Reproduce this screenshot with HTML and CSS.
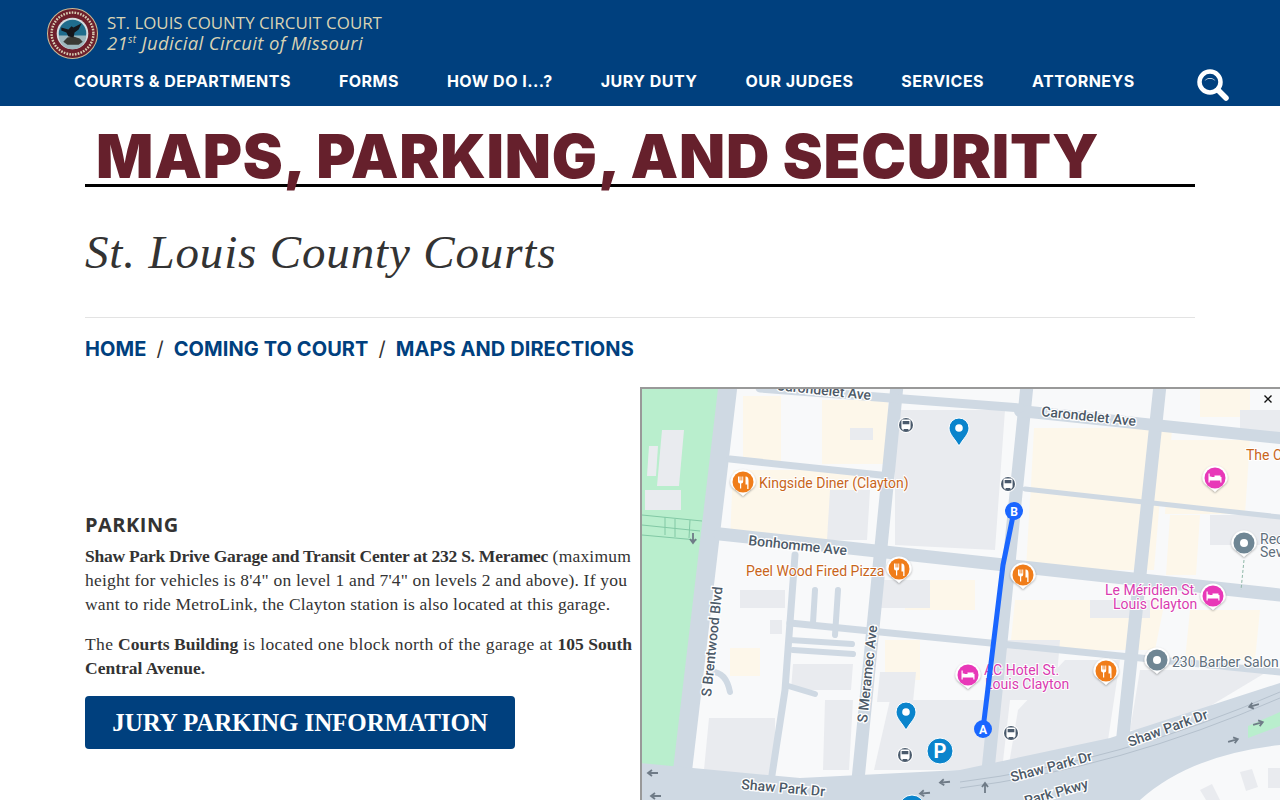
FILE: index.html
```html
<!DOCTYPE html>
<html lang="en">
    <head>
        <meta charset="UTF-8" />
        <title>Maps, Parking, and Security</title>
        <link rel="stylesheet" href="styles.css">
    </head>
    <body>
        <header class="site-header">
            <div class="brand">
                <svg class="seal" viewBox="0 0 50 50" aria-hidden="true">
                    <circle cx="25" cy="25" r="24.5" fill="#6d1f2b" stroke="#c9bb96" stroke-width="1"/>
                    <circle cx="25" cy="25" r="20.5" fill="none" stroke="#d8cfb4" stroke-width="2.4" stroke-dasharray="1.6 1.2"/>
                    <circle cx="25" cy="25" r="15.5" fill="#d5dde0"/>
                    <circle cx="25" cy="25" r="13.5" fill="#1f6c8c"/>
                    <path d="M11.5 27h27a13.5 13.5 0 0 1-27 0z" fill="#9fb7bd"/>
                    <path d="M16 33l4-4 6-1 6 2 3 3-4 3h-11z" fill="#3a3a34"/>
                    <path d="M14 19l7 2 3-3 2 1 8-4-3 6-4 3-1 5-5-1-2-4-5-2z" fill="#15161a"/>
                </svg>
                <div class="brand-text">
                    <div class="brand-name">ST. LOUIS COUNTY CIRCUIT COURT</div>
                    <div class="brand-sub">21<sup>st</sup> Judicial Circuit of Missouri</div>
                </div>
            </div>
            <nav class="main-nav">
                <a href="#">COURTS &amp; DEPARTMENTS</a>
                <a href="#">FORMS</a>
                <a href="#">HOW DO I...?</a>
                <a href="#">JURY DUTY</a>
                <a href="#">OUR JUDGES</a>
                <a href="#">SERVICES</a>
                <a href="#">ATTORNEYS</a>
                <svg class="search-icon" viewBox="0 0 32 32" aria-hidden="true">
                    <circle cx="13" cy="13" r="10.5" fill="none" stroke="#fff" stroke-width="4.5"/>
                    <path d="M7.5 12a6.5 6.5 0 0 1 11 0a8 8 0 0 0-11 0z" fill="#fff"/>
                    <path d="M21 21l8 8" stroke="#fff" stroke-width="5.5" stroke-linecap="round"/>
                </svg>
            </nav>
        </header>

        <main class="page">
            <h1 class="page-title">MAPS, PARKING, AND SECURITY</h1>
            <h2 class="subtitle">St. Louis County Courts</h2>
            <div class="breadcrumb">
                <a href="#">HOME</a><span>/</span><a href="#">COMING TO COURT</a><span>/</span><a href="#">MAPS AND DIRECTIONS</a>
            </div>

            <div class="content">
                <section class="info">
                    <h3>PARKING</h3>
                    <p><strong>Shaw Park Drive Garage and Transit Center at 232 S. Meramec</strong> (maximum height for vehicles is 8'4" on level 1 and 7'4" on levels 2 and above). If you want to ride MetroLink, the Clayton station is also located at this garage.</p>
                    <p>The <strong>Courts Building</strong> is located one block north of the garage at <strong>105 South Central Avenue.</strong></p>
                    <a class="btn" href="#">JURY PARKING INFORMATION</a>
                </section>

                <div class="map">
                    <svg class="map-svg" viewBox="640 387 640 413">
                        <defs>
                            <filter id="pin-shadow" x="-30%" y="-30%" width="160%" height="160%">
                                <feDropShadow dx="0" dy="1" stdDeviation="0.8" flood-color="#000" flood-opacity="0.35"/>
                            </filter>
                            <g id="tail">
                                <path d="M-12.5 0a12.5 12.5 0 1 1 25 0c0 6-7 8-12.5 14c-5.500-6-12.500-8-12.500-14z" fill="#fff" filter="url(#pin-shadow)"/>
                            </g>
                            <g id="food">
                                <use href="#tail"/>
                                <circle r="10.500" fill="#f07d1a"/>
                                <path d="M-5-5.500v5q0 2 2 2v5h1.200v-5q2 0 2-2v-5h-.9v4h-.9v-4h-.9v4h-.9v-4zM2.500-5.500q3-.2 3 4v8.500h-1.300v-4.500h-1.700z" fill="#fff"/>
                            </g>
                            <g id="hotel">
                                <use href="#tail"/>
                                <circle r="10.500" fill="#e838b8"/>
                                <path d="M-6.500-4.500v9h1.200v-2h10.600v2h1.200v-5.500h-10v-.5h-1.800v-3zM-.5-2.500h6v1.500h-6z" fill="#fff"/>
                            </g>
                            <g id="place">
                                <use href="#tail"/>
                                <circle r="10.500" fill="#6f8694"/>
                                <circle r="4" fill="#fff"/>
                            </g>
                            <g id="blue-pin">
                                <path d="M0-14a10 10 0 0 1 10 10c0 6-6 11-10 18c-4-7-10-12-10-18a10 10 0 0 1 10-10z" fill="#0a84cc" stroke="#fff" stroke-width="1"/>
                                <circle cy="-4" r="3.800" fill="#fff"/>
                            </g>
                            <g id="bus">
                                <circle r="8" fill="#fff"/>
                                <circle r="7" fill="#4a5a6c"/>
                                <path transform="scale(1.200)" d="M-3.800-3.500q0-1 1-1h5.600q1 0 1 1v6q0 .8-.8 .8v1h-1v-1h-4v1h-1v-1q-.8 0-.8-.8zM-2.800-3.300v2.600h5.600v-2.600z" fill="#fff"/>
                            </g>
                            <path id="arrow" d="M-7 0h10M-3-3l-4 3 4 3" fill="none" stroke="#6f7b87" stroke-width="1.800"/>
                        </defs>

                        <rect x="640" y="387" width="640" height="413" fill="#f8f9fa"/>
                        <path class="park" d="M640 387h79l-35 384h-44z"/>
                        <path class="park-path" d="M642 515l60 6M642 525l58 6M642 535l55 5M665 517v18M675 519v18M690 520l-1 18"/>

                        <!-- beige blocks and grey buildings -->
                        <g class="beige">
                            <path d="M743 396h38v66h-38z"/>
                            <path d="M822 400h66v64h-66z"/>
                            <path d="M733 470h130l-3 70h-130z"/>
                            <path d="M1034 428h138l-5 76h-137z"/>
                            <path d="M1170 440h80l-5 74h-80z"/>
                            <path d="M1030 498h130l-6 72h-128z"/>
                            <path d="M1170 515h30l-4 60h-30z"/>
                            <path d="M1200 387h50v30h-50z"/>
                            <path d="M1015 600h150l-10 50h-145z"/>
                            <path d="M885 640h35v40h-35z"/>
                            <path d="M730 648h30v28h-30z"/>
                            <path d="M1190 610h70l-5 50h-70z"/>
                            <path d="M905 580h70v30h-70z"/>
                        </g>
                        <g class="bldg">
                            <path d="M662 430h22l-5 56h-22z"/>
                            <path d="M649 446h9l-2 30h-9z"/>
                            <path d="M645 490h36v20h-36z"/>
                            <path d="M895 410h110l-10 140l-100-5z"/>
                            <path d="M850 428h23v12h-23z"/>
                            <path d="M830 490h40l-3 50h-40z"/>
                            <path d="M740 590h45v18h-45z"/>
                            <path d="M793 664h60l-2 26h-60z"/>
                            <path d="M770 620h12v14h-12z"/>
                            <path d="M709 718h66v62h-72z"/>
                            <path d="M825 700h28l-4 70h-26z"/>
                            <path d="M880 672h36l-3 30h-36z"/>
                            <path d="M890 700h120l-8 70h-128z"/>
                            <path d="M1000 640h60l-5 60h-60z"/>
                            <path d="M1065 660h55l-12 80l-100 30l10-60z"/>
                            <path d="M1140 670h130l-100 60h-40z"/>
                            <path d="M1240 410h40v30h-40z"/>
                            <path d="M1210 515h70v30h-70z"/>
                            <path d="M1090 600h60v18h-60z"/>
                            <path d="M880 580h50v28h-50z"/>
                        </g>

                        <!-- roads -->
                        <g class="road">
                            <path d="M728 385L682 775" stroke-width="19"/>
                            <path d="M897 385L857 790" stroke-width="13"/>
                            <path d="M1027 385L985 800" stroke-width="13"/>
                            <path d="M1160 385L1122 745" stroke-width="13"/>
                            <path d="M720 534L1280 595" stroke-width="13"/>
                            <path d="M1020 411L1280 438" stroke-width="12"/>
                            <path d="M760 388L1020 408" stroke-width="9"/>
                            <path d="M730 459L890 476" stroke-width="7"/>
                            <path d="M790 623L1280 672" stroke-width="7"/>
                            <path d="M1025 489L1280 517" stroke-width="5"/>
                            <path d="M795 555L785 690L772 775" stroke-width="7"/>
                            <path d="M815 590l-2 33M838 590l-3 45M790 640l62 4M793 650l60 4" stroke-width="6"/>
                            <path d="M785 685l30 9M712 672q14 0 18 20" stroke-width="6"/>
                        </g>
                        <path class="road-band" d="M640 763L800 778L960 770L1110 738L1280 683V745Q1190 755 1140 800H640z"/>
                        <path class="park" d="M1248 738l32-12v-14l-32 14z"/>
                        <path class="lane" d="M960 782q160-20 320-90M960 788q160-20 320-90"/>
                        <g class="bldg">
                            <path d="M1240 772l12-3 6 18-12 4z"/>
                            <path d="M1268 768h12v20h-12z"/>
                            <path d="M1200 790l12-6 8 16h-14z"/>
                        </g>

                        <use href="#arrow" x="655" y="773"/>
                        <use href="#arrow" x="658" y="796"/>
                        <use href="#arrow" x="947" y="782" transform="rotate(-5 947 782)"/>
                        <use href="#arrow" x="927" y="793" transform="rotate(-5 927 793)"/>
                        <use href="#arrow" x="1256" y="705" transform="rotate(-15 1256 705)"/>
                        <use href="#arrow" x="1256" y="724" transform="rotate(165 1256 724)"/>
                        <use href="#arrow" x="1231" y="741" transform="rotate(165 1231 741)"/>
                        <use href="#arrow" x="985" y="790" transform="rotate(90 985 790)"/>
                        <use href="#arrow" x="693" y="536" transform="rotate(-90 693 536)"/>

                        <!-- road names -->
                        <g class="road-name">
                            <text transform="translate(776 390) rotate(6)">Carondelet Ave</text>
                            <text transform="translate(1041 416) rotate(6)">Carondelet Ave</text>
                            <text transform="translate(748 545) rotate(6)">Bonhomme Ave</text>
                            <text transform="translate(711 697) rotate(-84)">S Brentwood Blvd</text>
                            <text transform="translate(867 723) rotate(-84)">S Meramec Ave</text>
                            <text transform="translate(741 789) rotate(5)">Shaw Park Dr</text>
                            <text transform="translate(1012 782) rotate(-15)">Shaw Park Dr</text>
                            <text transform="translate(1130 747) rotate(-20)">Shaw Park Dr</text>
                            <text transform="translate(1026 806) rotate(-16)">Park Pkwy</text>
                        </g>

                        <!-- markers -->
                        <use href="#food" x="743" y="482"/>
                        <use href="#food" x="899" y="569"/>
                        <use href="#food" x="1023" y="575"/>
                        <use href="#food" x="1106" y="671"/>
                        <use href="#hotel" x="1215" y="478"/>
                        <use href="#hotel" x="1213" y="596"/>
                        <use href="#hotel" x="968" y="675"/>
                        <use href="#place" x="1244" y="543"/>
                        <use href="#place" x="1157" y="660"/>
                        <use href="#blue-pin" x="959" y="432"/>
                        <use href="#blue-pin" x="906" y="716"/>
                        <use href="#bus" x="906" y="425"/>
                        <use href="#bus" x="1008" y="484"/>
                        <use href="#bus" x="905" y="755"/>
                        <use href="#bus" x="1011" y="733"/>
                        <circle cx="940" cy="751" r="13" fill="#0a84cc" stroke="#fff" stroke-width="1"/>
                        <text class="parking-letter" x="940" y="758">P</text>
                        <circle cx="912" cy="808" r="13" fill="#0a84cc" stroke="#fff" stroke-width="1"/>

                        <!-- place names -->
                        <g class="place-name food-name">
                            <text x="759" y="488">Kingside Diner (Clayton)</text>
                            <text x="746" y="576">Peel Wood Fired Pizza</text>
                            <text x="1246" y="460">The C</text>
                        </g>
                        <g class="place-name hotel-name">
                            <text x="1105" y="595">Le Méridien St.</text>
                            <text x="1113" y="609">Louis Clayton</text>
                            <text x="984" y="675">AC Hotel St.</text>
                            <text x="985" y="689">Louis Clayton</text>
                        </g>
                        <g class="place-name grey-name">
                            <text x="1260" y="544">Rec</text>
                            <text x="1260" y="557">Sev</text>
                            <text x="1172" y="667">230 Barber Salon</text>
                        </g>
                        <path d="M1244 560l-3 30" stroke="#8fb8a8" stroke-width="1" stroke-dasharray="3 2"/>

                        <!-- route -->
                        <path d="M1014 511L1003 565L983 729" fill="none" stroke="#1a66ff" stroke-width="5"/>
                        <circle cx="1014" cy="511" r="9" fill="#1a66ff"/>
                        <text class="route-letter" x="1014" y="515.500">B</text>
                        <circle cx="983" cy="729" r="9" fill="#1a66ff"/>
                        <text class="route-letter" x="983" y="733.500">A</text>

                        <path class="map-edge" d="M641 800V388H1280"/>
                        <path class="map-close" d="M1264.500 395.500l7 7M1271.500 395.500l-7 7"/>
                    </svg>
                </div>
            </div>
        </main>
    </body>
</html>
```

FILE: styles.css
```css
body {
  margin: 0;
  background: #fff;
  color: #333;
  overflow: hidden;
}

.site-header {
  background-color: #00407e;
  height: 106px;
}

.brand {
  display: flex;
  align-items: center;
  gap: 9px;
  padding: 8px 0 0 47px;
  height: 50px;
}

.seal {
  width: 51px;
  height: 51px;
}

.brand-text {
  color: #d9d3b4;
  font-family: "Open Sans", sans-serif;
  line-height: 20px;
}

.brand-name {
  font-size: 16.900px;
  font-weight: 500;
}

.brand-sub {
  font-size: 18.500px;
  font-weight: 500;
  font-style: italic;
  letter-spacing: .35px;
}

.brand-sub sup {
  font-size: 10px;
  line-height: 0;
}

.main-nav {
  display: flex;
  align-items: center;
  gap: 48px;
  padding: 3px 0 0 74px;
  position: relative;
}

.main-nav a {
  color: #fff;
  font-family: Inter, sans-serif;
  font-weight: 700;
  font-size: 16px;
  letter-spacing: .48px;
  line-height: 40px;
  text-decoration: none;
}

.search-icon {
  position: absolute;
  left: 1197px;
  top: 11px;
  width: 32px;
  height: 32px;
}

.page {
  padding: 0 85px;
}

.page-title {
  margin: 16px 0 0;
  padding-left: 11px;
  height: 62px;
  border-bottom: 3px solid #000;
  color: #66202c;
  font-family: Inter, sans-serif;
  font-weight: 900;
  font-size: 60px;
  letter-spacing: .8px;
  line-height: 69px;
}

.subtitle {
  margin: 37px 0 0;
  padding-bottom: 36px;
  border-bottom: 1px solid #e3e3e3;
  color: #333;
  font-family: "Liberation Serif", serif;
  font-style: italic;
  font-weight: 400;
  font-size: 47px;
  letter-spacing: .85px;
  line-height: 57px;
}

.breadcrumb {
  display: flex;
  gap: 10px;
  margin-top: 19px;
  font-family: Inter, sans-serif;
  font-size: 20px;
  line-height: 24px;
  color: #333;
}

.breadcrumb a {
  color: #00407e;
  font-weight: 700;
  letter-spacing: .08px;
  text-decoration: none;
}

.content {
  display: flex;
  margin-top: 26px;
  margin-right: -85px;
}

.info {
  flex: none;
  width: 555px;
  padding-top: 125px;
  font-family: "Liberation Serif", serif;
  font-size: 17.500px;
  letter-spacing: .2px;
  line-height: 24px;
}

.info h3 {
  margin: 0 0 6px;
  font-family: "Open Sans", sans-serif;
  font-size: 20px;
  font-weight: 700;
  letter-spacing: .5px;
  line-height: 26px;
}

.info p {
  margin: 0 0 16px;
}

.info strong {
  letter-spacing: -.25px;
}

.info p + p {
  letter-spacing: .38px;
}

.info p + p strong {
  letter-spacing: 0;
}

.btn {
  display: block;
  width: 430px;
  height: 53px;
  box-sizing: border-box;
  margin-top: 16px;
  background-color: #00407e;
  border-radius: 4px;
  color: #fff;
  font-size: 25px;
  font-weight: 700;
  letter-spacing: -.1px;
  line-height: 53px;
  text-align: center;
  text-decoration: none;
}

.map {
  flex: none;
  width: 640px;
  height: 413px;
}

.map-svg {
  display: block;
  width: 640px;
  height: 413px;
}

.park {
  fill: #b9eecd;
}

.park-path {
  fill: none;
  stroke: #82c9a5;
  stroke-width: 1;
}

.beige path {
  fill: #fdf7ea;
}

.bldg path {
  fill: #e9ebef;
}

.road path {
  fill: none;
  stroke: #cfd9e3;
  stroke-linecap: round;
}

.road-band {
  fill: #cfd9e3;
}

.lane {
  fill: none;
  stroke: #b5c1cd;
  stroke-width: 1;
}

.road-name text {
  fill: #4d5a68;
  stroke: #fff;
  stroke-width: 2.500px;
  paint-order: stroke;
  font-family: Roboto, sans-serif;
  font-weight: 500;
  font-size: 14px;
}

.place-name text {
  stroke: #fff;
  stroke-width: 2px;
  paint-order: stroke;
  font-family: Roboto, sans-serif;
  font-size: 14px;
}

.food-name text {
  fill: #c8651b;
}

.hotel-name text {
  fill: #d93bb0;
}

.grey-name text {
  fill: #5f6f7c;
}

.route-letter {
  fill: #fff;
  font-family: Roboto, sans-serif;
  font-weight: 700;
  font-size: 12px;
  text-anchor: middle;
}

.parking-letter {
  fill: #fff;
  font-family: Roboto, sans-serif;
  font-weight: 700;
  font-size: 20px;
  text-anchor: middle;
}

.map-edge {
  fill: none;
  stroke: #999;
  stroke-width: 2;
}

.map-close {
  fill: none;
  stroke: #111;
  stroke-width: 1.400;
}
```
